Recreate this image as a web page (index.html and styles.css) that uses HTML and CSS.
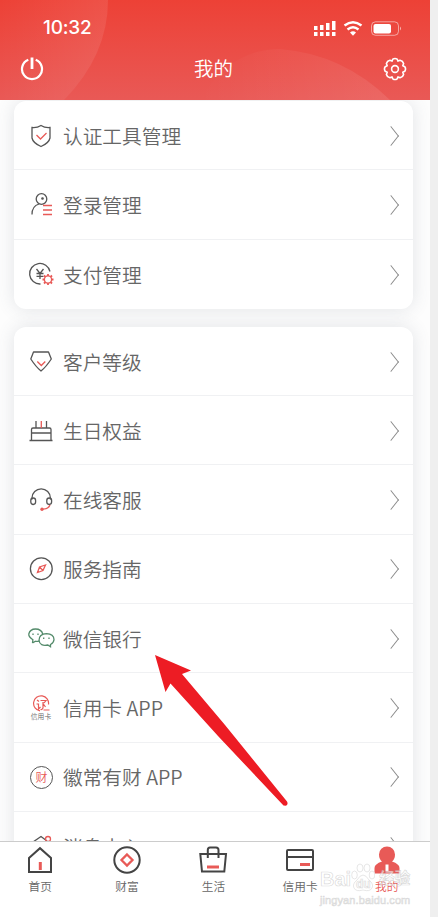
FILE: index.html
```html
<!DOCTYPE html>
<html lang="zh-CN">
<head>
  <meta charset="UTF-8">
  <title>我的</title>
  <meta name="viewport" content="width=device-width, initial-scale=1.0">
  <link rel="stylesheet" href="styles.css">
</head>
<body>
  <div class="phone">
    <header class="header">
      <svg class="header-bg" width="430" height="100" viewBox="0 0 430 100">
        <defs>
          <linearGradient id="fade" x1="0" x2="1"><stop offset="0" stop-color="#fff" stop-opacity="0"/><stop offset="1" stop-color="#fff" stop-opacity=".09"/></linearGradient>
        </defs>
        <path d="M0 0H108Q108 55 64 100H0Z" fill="url(#fade)"/>
        <path d="M200 100Q230 49 280 49Q343 54 390 100Z" fill="url(#fade)"/>
      </svg>
      <div class="status">
        <span class="time">10:32</span>
        <svg width="90" height="18" viewBox="0 0 90 18" fill="#fff">
          <path d="M1 7h3.500v4H1zM7 6h3.500v5H7zM13 4h3.500v7H13zM19 2h3.500v9H19zM1 13h3.500v4H1zM7 13h3.500v4H7zM13 13h3.500v4H13zM19 13h3.500v4H19z"/>
          <path d="M31.500 6.500Q40 -.200 48.500 6.500M34.500 10.500Q40 6 45.500 10.500" fill="none" stroke="#fff" stroke-width="2.400"/>
          <path d="M37 13.500Q40 11 43 13.500L40 16.700Z"/>
          <rect x="58.500" y="2.800" width="27" height="13.500" rx="4" fill="none" stroke="#fff" stroke-opacity=".5"/>
          <rect x="60.500" y="5" width="17.500" height="9.500" rx="2"/>
          <path d="M87 7.500Q89 9.500 87 11.500Z" opacity=".6"/>
        </svg>
      </div>
      <div class="nav">
        <svg width="24" height="24" viewBox="0 0 24 24" fill="none" stroke="#fff" stroke-width="2.200">
          <path d="M8.300 2.800a10 10 0 1 0 7.400 0"/><path d="M12 .500V12" stroke-width="2.800"/>
        </svg>
        <h1>我的</h1>
        <svg width="24" height="24" viewBox="0 0 24 24" fill="none" stroke="#fff" stroke-width="1.600" stroke-linejoin="round">
          <path d="M9.800 2.200Q12 .700 14.200 2.200L15 4.100L17.100 3.200Q19.900 3.800 20.600 6.500L19.800 8.800L21.800 9.800Q23.300 12 21.800 14.200L19.800 15.200L20.600 17.500Q19.900 20.200 17.100 20.800L15 19.900L14.200 21.800Q12 23.300 9.800 21.800L9 19.900L6.900 20.800Q4.100 20.200 3.400 17.500L4.200 15.200L2.200 14.200Q.700 12 2.200 9.800L4.200 8.800L3.400 6.500Q4.100 3.800 6.900 3.200L9 4.100Z"/>
          <circle cx="12" cy="12" r="3.400"/>
        </svg>
      </div>
    </header>

    <main class="content">
      <ul class="card">
        <li class="row">
          <svg class="icon" viewBox="0 0 30 30"><path d="M15 4.500Q19 7 24 6.500V17Q23 22 15 25.500Q7 22 6 17V6.500Q11 7 15 4.500Z"/><path class="red" d="M10.500 14l4 4 6-6"/></svg>
          <span>认证工具管理</span><i class="arrow"></i>
        </li>
        <li class="row">
          <svg class="icon" viewBox="0 0 30 30"><circle cx="15.500" cy="9" r="5.300"/><path d="M6 24.500Q6 16 13 14"/><circle class="dot" cx="16.500" cy="8.500" r=".7"/><path class="red" d="M17 15.500h9M17 20h9M17 24.500h9"/></svg>
          <span>登录管理</span><i class="arrow"></i>
        </li>
        <li class="row">
          <svg class="icon" viewBox="0 0 30 30"><path d="M14.500 24A10.300 10.300 0 1 1 24 11.500M10.500 9l3.500 4.500 3.500-4.500M14 13.500v5.500M10.500 13.500h7M10.500 16.300h7"/><circle class="red" cx="22" cy="19.500" r="3.600"/><path class="red cog" d="M22 14v2M22 23v2M16.500 19.500h2M25.500 19.500h2M18 15.500l1.500 1.500M24.500 22l1.500 1.500M26 15.500l-1.500 1.500M19.500 22l-1.500 1.500"/></svg>
          <span>支付管理</span><i class="arrow"></i>
        </li>
      </ul>

      <ul class="card">
        <li class="row">
          <svg class="icon" viewBox="0 0 30 30"><path d="M7.500 5H22.500L25.300 12Q20 20 15 24Q10 20 4.800 12Z" stroke-linejoin="round"/><path class="red" d="M11.300 14.500l4 4 4-4"/></svg>
          <span>客户等级</span><i class="arrow"></i>
        </li>
        <li class="row">
          <svg class="icon" viewBox="0 0 30 30"><path d="M3.500 24.500h23M5.500 24V13.500Q5.500 12 7 12H23.500Q25 12 25 13.500V24M5.500 17h19.500M10 5v7M20.500 5v7"/><path class="red" d="M15.300 5v7"/></svg>
          <span>生日权益</span><i class="arrow"></i>
        </li>
        <li class="row">
          <svg class="icon" viewBox="0 0 30 30"><path d="M6 14.500V13a9.200 9.200 0 0 1 18.400 0v1.500"/><rect x="4.800" y="13" width="4.800" height="6.500" rx="2.400"/><rect x="20.800" y="13" width="4.800" height="6.500" rx="2.400"/><path class="red" d="M24 20Q22.500 24 17 24.200"/><circle class="red-dot" cx="16" cy="24.200" r="1.700"/></svg>
          <span>在线客服</span><i class="arrow"></i>
        </li>
        <li class="row">
          <svg class="icon" viewBox="0 0 30 30"><circle cx="15.300" cy="14.700" r="10.900"/><path class="red" d="M19.500 11L17 16.500L11.500 18.500L13.500 13ZM13.500 13l3.500 3.500"/></svg>
          <span>服务指南</span><i class="arrow"></i>
        </li>
        <li class="row">
          <svg class="icon green" viewBox="0 0 30 30"><path d="M6.500 19l.400-3.300Q2.500 13 2.800 10Q4 5 9.500 5Q15.500 5 16.700 10M6.500 19l3-1.700q2 .300 4-.500"/><path d="M24.500 22.800l-2.700-1.800Q14 22.500 13 16.500Q13 10 20.500 9.700Q27.800 10 28 15.500Q28 18.500 24.500 20.500Z"/><path d="M7 9.500v1.500M12 9.500v1.500M17.700 13.500v1.500M23 13.500v1.500"/></svg>
          <span>微信银行</span><i class="arrow"></i>
        </li>
        <li class="row">
          <div class="app-icon">
            <svg width="18" height="17" viewBox="0 0 18 17" fill="none" stroke="#e85a57" stroke-width="1.200"><path d="M8 15.800A7.500 7.500 0 1 1 16.500 9.500M5 5l2 1.500M4.500 9h2v5l2-2M8.500 5.500h5.500l-2 2.500M11 7v6q-1 2-2.500 1.500M11 8.500l2.500 3.500M11.500 15h6"/></svg>
            <small>信用卡</small>
          </div>
          <span>信用卡 APP</span><i class="arrow"></i>
        </li>
        <li class="row">
          <div class="coin">财</div>
          <span>徽常有财 APP</span><i class="arrow"></i>
        </li>
        <li class="row">
          <svg class="icon" viewBox="0 0 30 30"><path d="M7 10L15 4.500L21 9M7 10v13h16V12"/><circle class="red" cx="22" cy="7" r="2.500"/></svg>
          <span>消息中心</span><i class="arrow"></i>
        </li>
      </ul>
    </main>

    <nav class="tabs">
      <div class="tab">
        <svg width="30" height="30" viewBox="0 0 30 30"><path d="M4 13L15 3.200L26 13V27H4Z"/><path class="red bar" d="M15.300 17v8"/></svg>
        <span>首页</span>
      </div>
      <div class="tab">
        <svg width="30" height="30" viewBox="0 0 30 30"><circle cx="15" cy="15" r="12.700"/><path class="red" d="M15 9.500L20.500 15L15 20.500L9.500 15Z"/></svg>
        <span>财富</span>
      </div>
      <div class="tab">
        <svg width="30" height="30" viewBox="0 0 30 30"><path d="M2.300 9H28L26.300 26.500H4ZM9.800 13V5Q9.800 2.500 12 2.500H18Q20.500 2.500 20.500 5V13"/><path class="red bar" d="M9 22h12"/></svg>
        <span>生活</span>
      </div>
      <div class="tab">
        <svg width="30" height="30" viewBox="0 0 30 30"><rect x="2" y="5" width="26" height="20" rx="1"/><path d="M2 12h26"/><path class="red bar" d="M15 19.500h10"/></svg>
        <span>信用卡</span>
      </div>
      <div class="tab active">
        <svg width="30" height="30" viewBox="0 0 30 30"><path class="person" d="M15 1.500A8 8 0 0 1 23 9.500Q23 14 20 16.500Q27.500 19 27.500 23V28.500H2.500V23Q2.500 19 10 16.500Q7 14 7 9.500A8 8 0 0 1 15 1.500ZM13.500 19.500v6.500h3V19.500Z" fill-rule="evenodd"/></svg>
        <span>我的</span>
      </div>
    </nav>

    <svg class="pointer" width="134" height="154" viewBox="0 0 134 154"><path d="M0 0L36 15.500L27 19L70 70L132 146.500Q133.500 149.500 131 150.800L128.500 150.500L63 81L15.500 28.500L10.500 37Z" fill="#ed1c24"/></svg>

    <div class="watermark">
      <div class="brand"><b>Bai</b>
        <svg width="24" height="29" viewBox="0 0 24 29"><ellipse cx="3.500" cy="12" rx="2.800" ry="4"/><ellipse cx="9" cy="5" rx="3" ry="4"/><ellipse cx="16" cy="5" rx="3" ry="4"/><ellipse cx="21" cy="12" rx="2.800" ry="4"/><path d="M12 12Q15 12 18 17Q23 21 21 25Q19 29 12 27Q5 29 3 25Q1 21 6 17Q9 12 12 12Z"/><text x="5" y="25">du</text></svg>
        <b>经验</b></div>
      <div class="site">jingyan.baidu.com</div>
    </div>
  </div>
</body>
</html>
```

FILE: styles.css
```css
:root {
  --text:#666;
  --red:#e85a57;
  --line:#f0f1f3;
}
* {box-sizing:border-box;}
body {
  margin:0;
  height:917px;
  background:#efefef;
  font-family:"Noto Sans CJK SC DemiLight","Noto Sans CJK SC",sans-serif;
  font-weight:350;
  color:var(--text);
  overflow:hidden;
}
.phone {
  position:relative;
  width:430px; height:917px;
  display:flex; flex-direction:column;
  background:#fff;
  overflow:hidden;
}
.header {
  position:relative;
  flex:none;
  height:100px;
  background:linear-gradient(#ed4136,#e95956);
  color:#fff;
}
.header-bg {position:absolute; left:0; top:0;}
.status, .nav {
  position:relative;
  display:flex; align-items:center; justify-content:space-between;
}
.status {height:54px; padding:2px 27px 0 43px;}
.time {font:500 19px/24px Inter,sans-serif; letter-spacing:-.2px;}
.nav {height:30px; padding:0 23px 0 20px;}
.nav h1 {margin:0; padding-bottom:2px; font-size:19.500px; font-weight:300; line-height:28px;}
.content {
  flex:1; min-height:0;
  display:flex; flex-direction:column; gap:18px;
  padding:1px 17px 0 14px;
  background:#fdfdfd;
  overflow:hidden;
}
.card {
  flex:none;
  margin:0; padding:0;
  list-style:none;
  background:#fff;
  border-radius:12px;
  box-shadow:0 0 18px rgba(80,95,115,.16);
}
.row {
  display:flex; align-items:center;
  height:69.300px;
  padding:1px 12px 0;
  font-size:19.700px;
  border-bottom:1.500px solid var(--line);
}
.row:last-child {border-bottom:none;}
.row span {margin-left:7px; line-height:28px;}
.icon {
  width:30px; height:30px;
  fill:none; stroke:#555; stroke-width:1.300;
}
.red {stroke:var(--red);}
.icon .cog {stroke-width:1.800;}
.dot {fill:#555;}
.red-dot {fill:var(--red); stroke:none;}
.green {stroke:#548b6b;}
.arrow {
  width:14px; height:14px;
  margin-left:auto; margin-right:3px;
  border-top:1.400px solid #888; border-right:1.400px solid #888;
  transform:scaleX(.8) rotate(45deg);
}
.app-icon {
  width:30px;
  display:flex; flex-direction:column; align-items:center;
}
.app-icon small {font-size:6.800px; line-height:9px; font-weight:400;}
.coin {
  width:23px; height:23px;
  margin:0 3px 0 4px;
  border:1.300px solid #555; border-radius:50%;
  color:var(--red);
  font-size:12px; font-weight:500; line-height:20px; text-align:center;
}
.tabs {
  flex:none;
  display:flex;
  width:433px; height:76px;
  margin-left:-3px;
  border-top:1px solid #ccc;
  background:#fff;
}
.tab {
  flex:1;
  display:flex; flex-direction:column; align-items:center;
  padding-top:3px;
  font-size:11.700px; line-height:22px;
}
.tab svg {fill:none; stroke:#444; stroke-width:2;}
.tab .red {stroke:var(--red); stroke-width:2.300;}
.tab .bar {stroke-width:3;}
.tab .person {fill:var(--red); stroke:none;}
.active {color:var(--red);}
.pointer {position:absolute; left:155px; top:655px;}
.watermark {
  position:absolute; left:320px; top:864px;
  color:rgba(255,255,255,.6);
  font-family:"Liberation Sans","Noto Sans CJK SC",sans-serif;
  -webkit-text-stroke:.7px rgba(160,160,160,.4);
}
.brand {display:flex; align-items:center; height:29px; font-size:20px; line-height:36px;}
.brand b:last-child {font-size:15.500px; margin-left:4px; line-height:29px;}
.brand svg {fill:rgba(255,255,255,.7); stroke:#ddd; stroke-width:.7; margin-top:-2px;}
.brand text {font-size:12px; font-weight:bold;}
.site {font-size:11px; line-height:14px; letter-spacing:.1px;}
```
